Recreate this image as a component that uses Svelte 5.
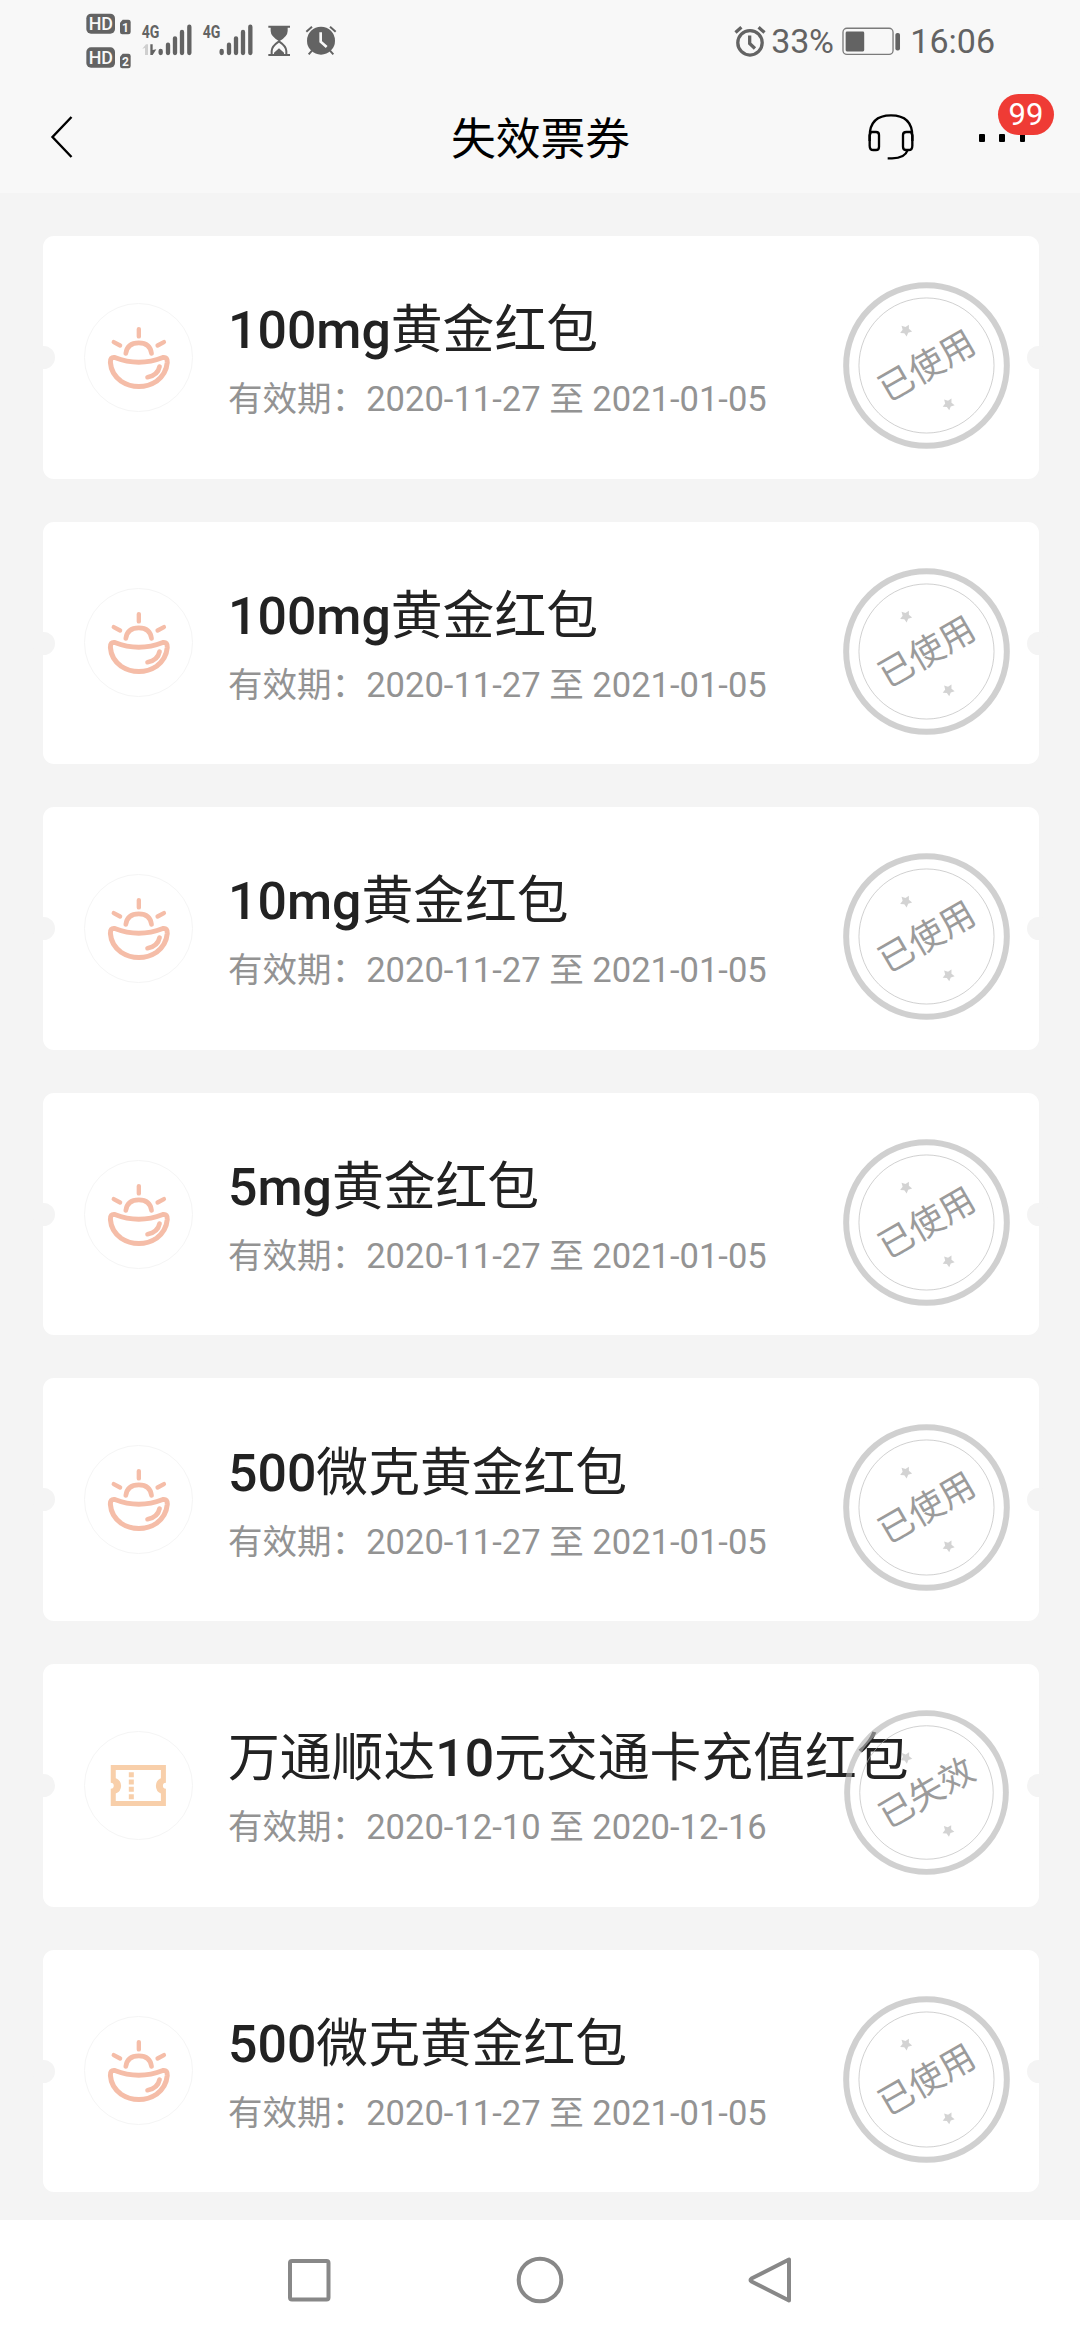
<script>
  const used = '2020-11-27 至 2021-01-05';
  const coupons = [
    { title: '100mg黄金红包', period: used, kind: 'gold', stamp: '已使用' },
    { title: '100mg黄金红包', period: used, kind: 'gold', stamp: '已使用' },
    { title: '10mg黄金红包', period: used, kind: 'gold', stamp: '已使用' },
    { title: '5mg黄金红包', period: used, kind: 'gold', stamp: '已使用' },
    { title: '500微克黄金红包', period: used, kind: 'gold', stamp: '已使用' },
    { title: '万通顺达10元交通卡充值红包', period: '2020-12-10 至 2020-12-16', kind: 'ticket', stamp: '已失效' },
    { title: '500微克黄金红包', period: used, kind: 'gold', stamp: '已使用' }
  ];

  // Splits a title into Latin and Chinese runs, since only the Latin ones are set in medium weight.
  const runs = (title) => title.match(/[\x21-\x7e]+|[^\x21-\x7e]+/g);
  const isLatin = (run) => /^[\x21-\x7e]/.test(run);

  // Five-pointed star centred on the origin.
  const star = Array.from({ length: 10 }, (_, i) => {
    const r = i % 2 ? 10 : 19;
    const a = (i * Math.PI) / 5 - Math.PI / 2 + 0.5;
    return `${(r * Math.cos(a)).toFixed(1)},${(r * Math.sin(a)).toFixed(1)}`;
  }).join(' ');
</script>

<div class="screen">
  <div class="status">
    <svg class="signals" viewBox="0 0 870 240" aria-hidden="true">
      <g class="fill">
        <rect x="49" y="41" width="86" height="60" rx="14" />
        <rect x="49" y="142" width="86" height="61" rx="14" />
        <path d="M158 59h17q7 0 7 7v30q0 7-7 7h-18q-7 0-7-7V68z" />
        <path d="M158 161h17q7 0 7 7v30q0 7-7 7h-18q-7 0-7-7v-28z" />
      </g>
      <g class="hd">
        <text x="56" y="91" textLength="73" lengthAdjust="spacingAndGlyphs">HD</text>
        <text x="56" y="193" textLength="73" lengthAdjust="spacingAndGlyphs">HD</text>
      </g>
      <g class="sim">
        <text x="156" y="97">1</text>
        <text x="156" y="199">2</text>
      </g>
      <g class="gen">
        <text x="215" y="114" textLength="53" lengthAdjust="spacingAndGlyphs">4G</text>
        <text x="398" y="114" textLength="53" lengthAdjust="spacingAndGlyphs">4G</text>
      </g>
      <path d="M217 146l11-13h6v32h-9v-21z" fill="#cfcfcf" />
      <path class="fill" d="M241 133h7v17l11-2-11 17h-7z" />
      <g class="bars">
        <path d="M272 153v6M294 134v25M315 115v44M336 96v63M358 80v79" />
        <path d="M455 153v6M477 134v25M498 115v44M519 96v63M541 80v79" />
      </g>
      <g class="line">
        <path d="M595 80h65M595 165h65" />
        <path d="M605 165v-12q0-14 22-29q22 15 22 29v12" />
      </g>
      <path class="fill" d="M602 80h51v13q0 16-25 31q-26-15-26-31zM612 163v-5l15-13l15 13v5z" />
      <circle class="fill" cx="753" cy="122" r="42" />
      <path class="line" d="M709 95l17-15M797 95l-17-15M726 152l-10 11M780 152l10 11" />
      <path d="M752 97v28l18 16" fill="none" stroke="#f8f8f8" stroke-width="8" />
    </svg>
    <div class="system">
      <svg class="alarm" viewBox="42 70 96 100" aria-hidden="true">
        <g fill="none" stroke="#636363" stroke-width="10">
          <circle cx="90" cy="124" r="37" />
          <path d="M46 93l18-16M134 93l-18-16" />
          <path d="M89 102v24l16 15" />
        </g>
      </svg>
      <span class="percent">33%</span>
      <svg class="battery" viewBox="368 78 178 86" aria-hidden="true">
        <rect x="371" y="81" width="151" height="79" rx="12" fill="none" stroke="#7b7b7b" stroke-width="4" />
        <rect x="379" y="91" width="56" height="60" rx="4" fill="#636363" />
        <rect x="529" y="95" width="14" height="53" rx="6" fill="#636363" />
      </svg>
      <span class="clock">16:06</span>
    </div>
  </div>

  <header>
    <svg class="back" viewBox="0 0 24 44" aria-hidden="true">
      <path d="M21.500 2L2.500 22L21.500 42" fill="none" stroke="#000" stroke-width="2.400" />
    </svg>
    <h1>失效票券</h1>
    <div class="actions">
      <svg class="headset" viewBox="80 98 144 144" aria-hidden="true">
        <g fill="none" stroke="#000" stroke-width="7">
          <path d="M88 182v-14q0-63 64-63q64 0 64 63v14" />
          <path d="M92 155h15q9 0 9 9v35q0 10-9 10h-8q-11 0-11-13v-31z" />
          <path d="M212 155h-14q-10 0-10 9v35q0 10 10 10h7q11 0 11-13v-31z" />
          <path d="M202 209q-8 25-47 25h-13" />
        </g>
      </svg>
      <div class="more">
        <i></i><i></i><i></i>
        <span class="badge">99</span>
      </div>
    </div>
  </header>

  <main>
    {#each coupons as coupon}
      <article>
        <div class="icon">
          {#if coupon.kind === 'gold'}
            <svg viewBox="0 0 326 326" aria-hidden="true">
              <g fill="none" stroke="#f5bda8" stroke-linecap="round" stroke-linejoin="round">
                <path stroke-width="13" d="M164 78v22M89 117l19 10M239 117l-19 10" />
                <path stroke-width="14" d="M125 151q4-32 39-32q34 0 38 32" />
                <path stroke-width="15" d="M92 163Q164 191 236 163Q250 161 249 178Q246 212 217 234Q193 250 164 250Q135 250 111 234Q81 212 79 178Q78 161 92 163Z" />
                <path stroke-width="14" d="M190 222q31-6 36-32" />
              </g>
            </svg>
          {:else}
            <svg viewBox="0 0 326 326" aria-hidden="true">
              <path fill="#f8cfaa" fill-rule="evenodd" d="M80 102H245V155A9 9 0 0 0 245 173V224H80V173A9 9 0 0 0 80 155ZM95 117V141Q111 147 111 164Q111 181 95 187V209H230V187Q215 181 215 164Q215 147 230 141V117Z" />
              <path fill="#f8cfaa" d="M134 123h15v15h-15zM134 145h15v15h-15zM134 167h15v15h-15zM134 189h15v15h-15z" />
            </svg>
          {/if}
        </div>
        <div class="info">
          <h2>{#each runs(coupon.title) as run}<span class:latin={isLatin(run)}>{run}</span>{/each}</h2>
          <p>有效期：{coupon.period}</p>
        </div>
        <svg class="stamp" class:expired={coupon.kind === 'ticket'} viewBox="-251 -251 502 502" aria-hidden="true">
          <g class="ring">
            <circle r="241.500" stroke-width="18" />
            <circle r="203" stroke-width="3" />
          </g>
          <g class="stars">
            <polygon points={star} transform="translate(-62 -106)" />
            <polygon points={star} transform="translate(66 116)" />
          </g>
          <text transform="rotate(-30)" x="0" y="38">{coupon.stamp}</text>
        </svg>
      </article>
    {/each}
  </main>

  <nav>
    <svg viewBox="0 0 48 48" aria-hidden="true"><rect x="5" y="5" width="38.500" height="38.500" rx="2" /></svg>
    <svg viewBox="0 0 48 48" aria-hidden="true"><circle cx="24" cy="24" r="21.300" /></svg>
    <svg viewBox="0 0 48 48" aria-hidden="true"><path d="M42 3.500v41L4.500 25.500q-2-1.500 0-3z" /></svg>
  </nav>
</div>

<style>
  :global(body) {
    margin: 0;
    background: #f4f4f4;
  }

  .screen {
    width: 1080px;
    height: 2340px;
    display: flex;
    flex-direction: column;
    overflow: hidden;
    background: #f4f4f4;
    font-family: Roboto, 'Noto Sans CJK SC', sans-serif;
  }

  svg {
    display: block;
    flex: none;
  }

  .status {
    height: 80px;
    flex: none;
    box-sizing: border-box;
    padding: 0 85px 0 70px;
    display: flex;
    justify-content: space-between;
    background: #f8f8f8;
    color: #636363;
  }

  .signals {
    width: 290px;
    height: 80px;
  }

  .fill {
    fill: #636363;
  }

  .hd text {
    fill: #f8f8f8;
    font-size: 54px;
    font-weight: 500;
  }

  .sim text {
    fill: #f8f8f8;
    font-size: 36px;
    font-weight: 700;
  }

  .gen text {
    fill: #636363;
    font-size: 54px;
    font-weight: 700;
  }

  .bars {
    stroke: #636363;
    stroke-width: 13px;
    stroke-linecap: round;
  }

  .line {
    fill: none;
    stroke: #636363;
    stroke-width: 6px;
  }

  .system {
    display: flex;
    align-items: center;
    font-size: 34px;
    line-height: 40px;
    padding-top: 2px;
  }

  .alarm {
    width: 32px;
    height: 33px;
    margin-right: 5px;
  }

  .percent {
    width: 71px;
    letter-spacing: -0.3px;
  }

  .battery {
    width: 59px;
    height: 29px;
    margin-right: 9px;
  }

  header {
    height: 113px;
    flex: none;
    box-sizing: border-box;
    padding: 0 55px 0 50px;
    display: grid;
    grid-template-columns: 160px 1fr 154px;
    align-items: center;
    background: #f8f8f8;
  }

  .back {
    width: 24px;
    height: 44px;
  }

  h1 {
    margin: 0;
    padding-top: 7px;
    text-align: center;
    font-size: 44.800px;
    line-height: 60px;
    font-weight: 400;
    color: #000;
  }

  .actions {
    display: flex;
    align-items: center;
    justify-content: flex-end;
    gap: 64px;
  }

  .headset {
    width: 48px;
    height: 48px;
  }

  .more {
    position: relative;
    width: 46px;
    height: 8px;
    flex: none;
    display: flex;
    justify-content: space-between;
    margin-top: 3px;
  }

  .more i {
    width: 5.500px;
    height: 8px;
    border-radius: 1px;
    background: #000;
  }

  .badge {
    position: absolute;
    left: 19px;
    top: -40px;
    width: 56px;
    height: 41px;
    border-radius: 21px;
    background: #ef3b35;
    color: #fff;
    font-size: 31px;
    line-height: 42px;
    text-align: center;
  }

  main {
    flex: 1;
    display: flex;
    flex-direction: column;
    gap: 43px;
    padding: 43px 41px 0 43px;
  }

  article {
    position: relative;
    height: 242.600px;
    flex: none;
    box-sizing: border-box;
    padding-left: 41px;
    display: flex;
    align-items: center;
    gap: 35px;
    border-radius: 11px;
    background: #fff;
  }

  article::before,
  article::after {
    content: '';
    position: absolute;
    top: 110px;
    width: 23px;
    height: 23px;
    border-radius: 50%;
    background: #f4f4f4;
  }

  article::before {
    left: -11px;
  }

  article::after {
    right: -11px;
  }

  .icon {
    width: 109px;
    height: 109px;
    flex: none;
    box-sizing: border-box;
    border: 1px solid #f5f5f5;
    border-radius: 50%;
  }

  .icon svg {
    width: 109px;
    height: 109px;
    margin: -1px;
  }

  .info {
    display: flex;
    flex-direction: column;
    padding-top: 8px;
    white-space: nowrap;
  }

  h2 {
    margin: 0;
    font-size: 51.800px;
    line-height: 76px;
    font-weight: 400;
    color: #222;
  }

  .latin {
    font-weight: 500;
  }

  p {
    margin: 0;
    font-size: 34.560px;
    line-height: 60px;
    color: #939393;
  }

  .stamp {
    position: absolute;
    right: 29px;
    top: 46px;
    width: 167px;
    height: 167px;
  }

  .stamp.expired {
    width: 165px;
    height: 165px;
    right: 30px;
  }

  .ring {
    fill: none;
    stroke: #b5b5b5;
    stroke-opacity: 0.640;
  }

  .stars {
    fill: #b5b5b5;
    fill-opacity: 0.600;
  }

  .stamp text {
    fill: #9b9b9b;
    font-size: 105px;
    text-anchor: middle;
  }

  nav {
    height: 120px;
    flex: none;
    box-sizing: border-box;
    padding: 0 285px;
    display: flex;
    align-items: center;
    justify-content: space-between;
    background: #fff;
  }

  nav svg {
    width: 48px;
    height: 48px;
    fill: none;
    stroke: #888;
    stroke-width: 4px;
    stroke-linejoin: round;
  }
</style>
